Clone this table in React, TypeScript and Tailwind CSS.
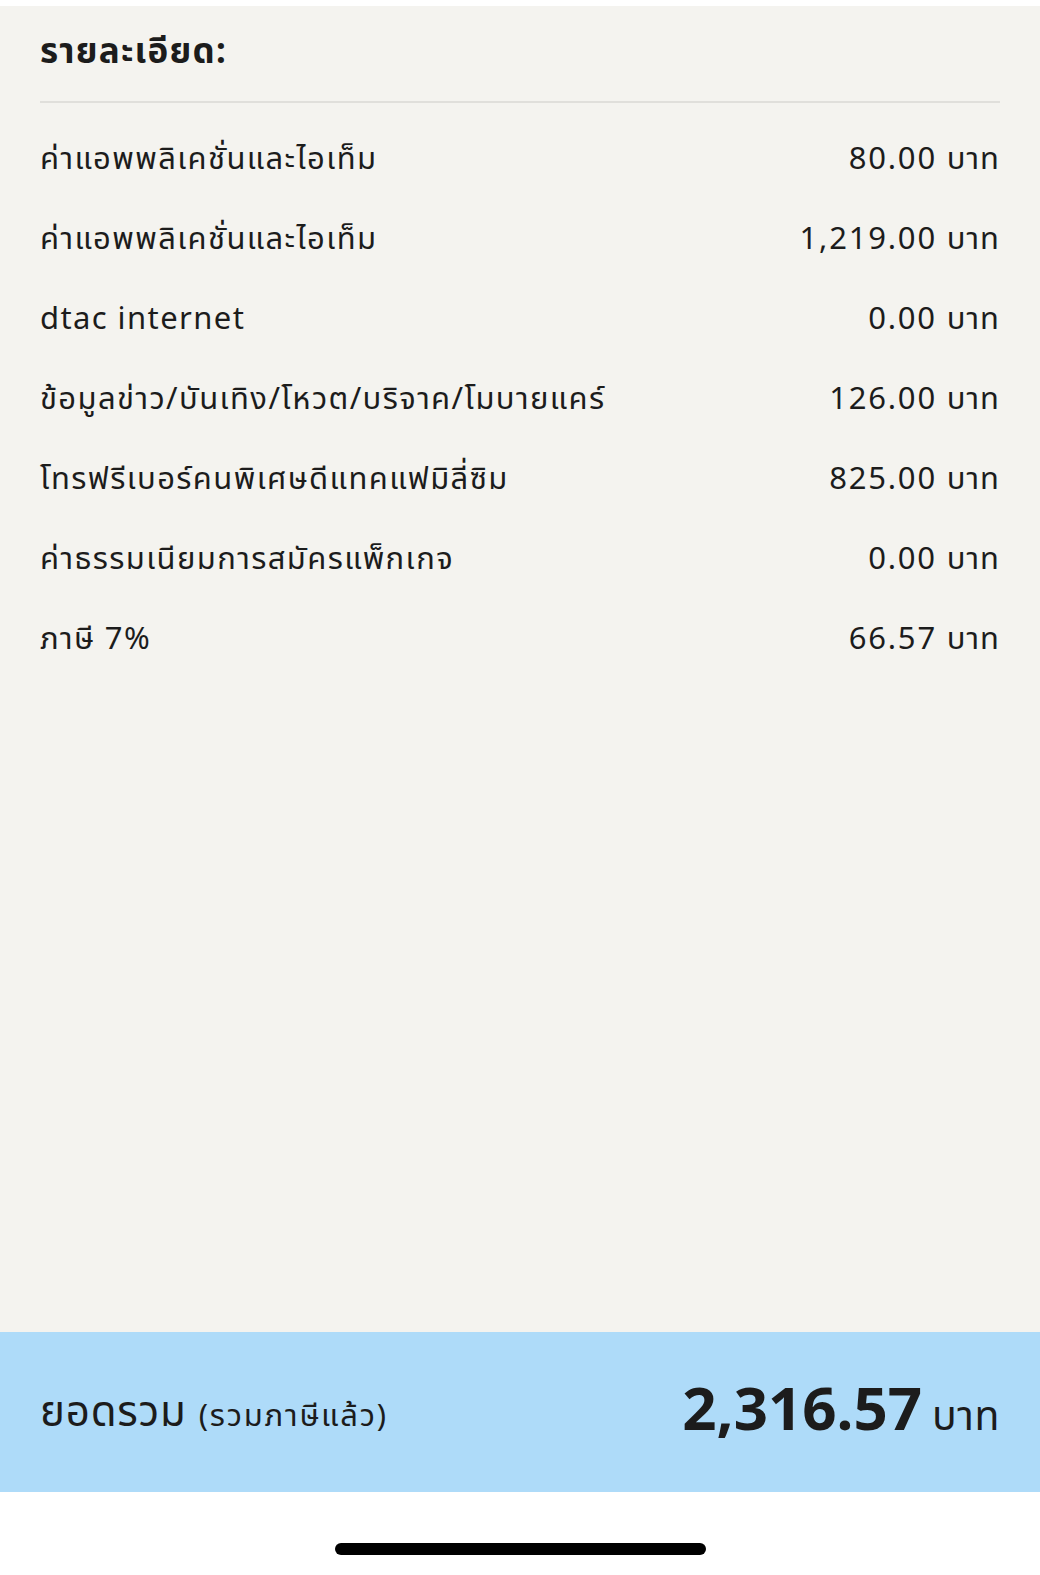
import React from 'react';

const ROWS: { label: string; amount: string }[] = [
  { label: 'ค่าแอพพลิเคชั่นและไอเท็ม', amount: '80.00' },
  { label: 'ค่าแอพพลิเคชั่นและไอเท็ม', amount: '1,219.00' },
  { label: 'dtac internet', amount: '0.00' },
  { label: 'ข้อมูลข่าว/บันเทิง/โหวต/บริจาค/โมบายแคร์', amount: '126.00' },
  { label: 'โทรฟรีเบอร์คนพิเศษดีแทคแฟมิลี่ซิม', amount: '825.00' },
  { label: 'ค่าธรรมเนียมการสมัครแพ็กเกจ', amount: '0.00' },
  { label: 'ภาษี 7%', amount: '66.57' },
];

const App: React.FC = () => {
  return (
    <div className="w-[1040px] h-[1575px] flex flex-col bg-white text-[#1c1c1c] font-['Noto_Sans','Noto_Sans_Thai','Liberation_Sans',sans-serif]">
      <div className="h-[6px] bg-white" />

      {/* Details */}
      <div className="flex-1 bg-[#f4f3ef] px-[40px]">
        <h2 className="pt-[20px] h-[95px] text-[35px] leading-[48px] font-bold tracking-[1.2px]">รายละเอียด:</h2>
        <div className="h-[2px] bg-[#e0dfdb]" />
        <div className="pt-[14px]">
          {ROWS.map((row, i) => (
            <div key={i} className="h-[80px] flex items-center justify-between text-[31px]">
              <span className="tracking-[1.4px]">{row.label}</span>
              <span className="tracking-[1.8px]">
                {row.amount} <span className="tracking-[1px]">บาท</span>
              </span>
            </div>
          ))}
        </div>
      </div>

      {/* Total */}
      <div className="h-[160px] bg-[#aedbf9] px-[40px] flex items-center justify-between">
        <div className="flex items-baseline gap-[12px] -mt-[6px]">
          <span className="text-[42px] tracking-[0.8px]">ยอดรวม</span>
          <span className="text-[31px] tracking-[1.8px]">(รวมภาษีแล้ว)</span>
        </div>
        <div className="flex items-baseline gap-[10px] -mt-[10px]">
          <span className="text-[60px] font-bold">2,316.57</span>
          <span className="text-[41px] tracking-[0.5px]">บาท</span>
        </div>
      </div>

      {/* Home indicator */}
      <div className="h-[83px] bg-white pt-[51px] flex justify-center">
        <div className="w-[371px] h-[12px] rounded-full bg-black" />
      </div>
    </div>
  );
};

export default App;
